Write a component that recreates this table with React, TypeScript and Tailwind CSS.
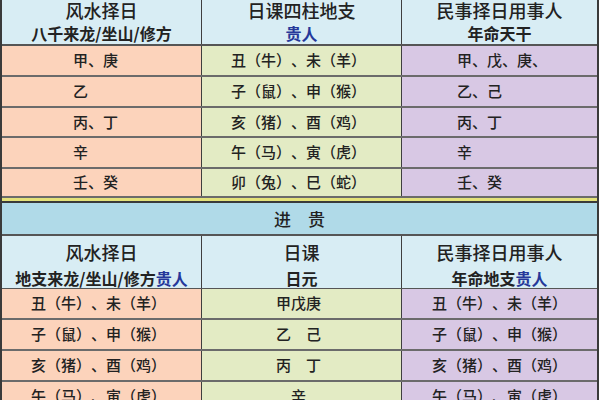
import React from "react";

const font = { fontFamily: '"Noto Sans CJK SC", "Noto Sans", sans-serif' };

type Row = { h: string; a: string; b: string; c: string };

const topRows: Row[] = [
  { h: "h-[31px]", a: "甲、庚", b: "丑（牛）、未（羊）", c: "甲、戊、庚、" },
  { h: "h-[31px]", a: "乙", b: "子（鼠）、申（猴）", c: "乙、己" },
  { h: "h-[30px]", a: "丙、丁", b: "亥（猪）、酉（鸡）", c: "丙、丁" },
  { h: "h-[31px]", a: "辛", b: "午（马）、寅（虎）", c: "辛" },
  { h: "h-[29px]", a: "壬、癸", b: "卯（兔）、巳（蛇）", c: "壬、癸" },
];

const bottomRows: Row[] = [
  { h: "h-[31px]", a: "丑（牛）、未（羊）", b: "甲戊庚", c: "丑（牛）、未（羊）" },
  { h: "h-[31px]", a: "子（鼠）、申（猴）", b: "乙　己", c: "子（鼠）、申（猴）" },
  { h: "h-[31px]", a: "亥（猪）、酉（鸡）", b: "丙　丁", c: "亥（猪）、酉（鸡）" },
  { h: "h-[31px]", a: "午（马）、寅（虎）", b: "辛", c: "午（马）、寅（虎）" },
];

const Blue = ({ children }: { children: React.ReactNode }) => (
  <span className="text-[#25389a]">{children}</span>
);

function HeaderCell({
  title,
  sub,
  last,
  top,
}: {
  title: string;
  sub: React.ReactNode;
  last?: boolean;
  top?: boolean;
}) {
  return (
    <div
      className={`flex flex-col items-center bg-[#d8edf4] ${
        last ? "" : "border-r border-[#3f3f3f]"
      } ${top ? "pt-0" : "pt-[6px]"}`}
    >
      <div className="text-[18px] leading-[21px] font-medium">{title}</div>
      <div className={`${top ? "mt-[3px]" : "mt-[6px]"} text-[16px] leading-[19px] font-bold`}>
        {sub}
      </div>
    </div>
  );
}

function DataRow({ row, centered }: { row: Row; centered: boolean }) {
  return (
    <div
      className={`grid grid-cols-[200px_200px_1fr] ${row.h} border-b-2 border-[#6b6b6b] text-[15px] font-medium`}
    >
      <div
        className={`flex items-center bg-[#fcd3bb] border-r border-[#3f3f3f] ${
          centered ? "justify-center pr-[6px]" : "pl-[71px]"
        }`}
      >
        {row.a}
      </div>
      <div className="flex items-center justify-center bg-[#e3ebc4] border-r border-[#3f3f3f] pr-[6px]">
        {row.b}
      </div>
      <div
        className={`flex items-center bg-[#d8c8e4] ${
          centered ? "justify-center" : "pl-[55px]"
        }`}
      >
        {row.c}
      </div>
    </div>
  );
}

export default function App() {
  return (
    <div
      className="w-[600px] h-[400px] overflow-hidden bg-white [text-spacing-trim:space-all]"
      style={font}
    >
      <div className="w-[599px] border-l-2 border-r-2 border-[#3a3a3a] text-[#222]">
        <div className="grid grid-cols-[200px_200px_1fr] h-[46px] border-b-2 border-[#555]">
          <HeaderCell top title="风水择日" sub="八千来龙/坐山/修方" />
          <HeaderCell top title="日课四柱地支" sub={<Blue>贵人</Blue>} />
          <HeaderCell top last title="民事择日用事人" sub="年命天干" />
        </div>
        {topRows.map((r, i) => (
          <DataRow key={i} row={r} centered={false} />
        ))}
        <div className="h-[5px] bg-[#e4e27a] border-b-2 border-[#3a3a3a]" />
        <div className="h-[33px] flex items-center justify-center bg-[#b0dae8] border-b-2 border-[#555] text-[17px] font-medium">
          进　贵
        </div>
        <div className="grid grid-cols-[200px_200px_1fr] h-[53px] border-b-2 border-[#555]">
          <HeaderCell
            title="风水择日"
            sub={
              <>
                地支来龙/坐山/修方<Blue>贵人</Blue>
              </>
            }
          />
          <HeaderCell title="日课" sub="日元" />
          <HeaderCell
            last
            title="民事择日用事人"
            sub={
              <>
                年命地支<Blue>贵人</Blue>
              </>
            }
          />
        </div>
        {bottomRows.map((r, i) => (
          <DataRow key={i} row={r} centered />
        ))}
      </div>
    </div>
  );
}
